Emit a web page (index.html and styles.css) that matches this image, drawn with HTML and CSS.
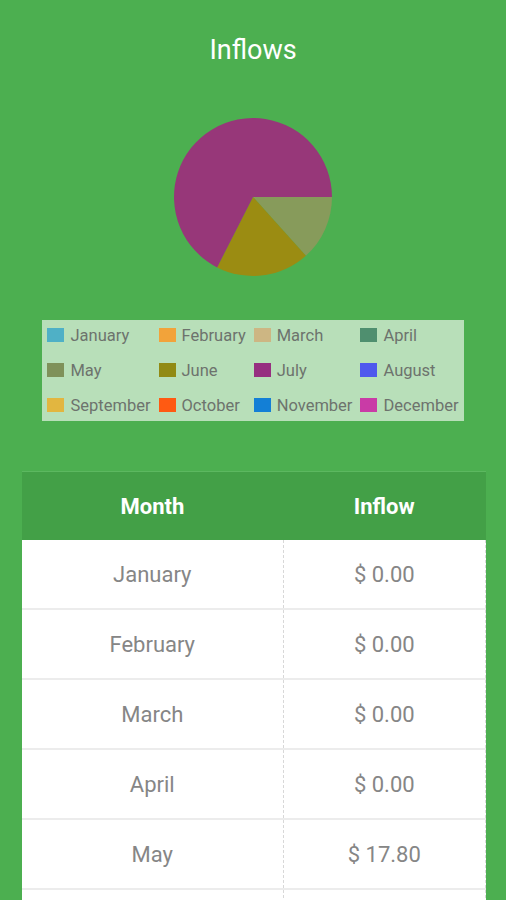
FILE: index.html
```html
<!DOCTYPE html>
<html lang="en">
<head>
    <meta charset="UTF-8">
    <meta name="viewport" content="width=device-width, initial-scale=1.0">
    <title>Inflows</title>
    <link rel="stylesheet" href="styles.css">
</head>
<body>
    <h1 class="title">Inflows</h1>

    <div class="chart">
        <svg width="160" height="160" viewBox="0 0 160 160">
            <path d="M80 80 L159 80 A79 79 0 0 1 132.86 138.71 Z" fill="#879b5b"/>
            <path d="M80 80 L132.86 138.71 A79 79 0 0 1 44.13 150.39 Z" fill="#9b8c12"/>
            <path d="M80 80 L44.13 150.39 A79 79 0 1 1 159 80 Z" fill="#973779"/>
        </svg>
    </div>

    <div class="legend-wrap">
        <div class="legend">
            <div class="legend-item"><span class="swatch" style="background:#4fb0c6"></span>January</div>
            <div class="legend-item"><span class="swatch" style="background:#f2a33a"></span>February</div>
            <div class="legend-item"><span class="swatch" style="background:#cdb683"></span>March</div>
            <div class="legend-item"><span class="swatch" style="background:#4f8f6f"></span>April</div>
            <div class="legend-item"><span class="swatch" style="background:#7f915a"></span>May</div>
            <div class="legend-item"><span class="swatch" style="background:#918a14"></span>June</div>
            <div class="legend-item"><span class="swatch" style="background:#962f80"></span>July</div>
            <div class="legend-item"><span class="swatch" style="background:#4f58ee"></span>August</div>
            <div class="legend-item"><span class="swatch" style="background:#e2b640"></span>September</div>
            <div class="legend-item"><span class="swatch" style="background:#ff5a12"></span>October</div>
            <div class="legend-item"><span class="swatch" style="background:#137fd6"></span>November</div>
            <div class="legend-item"><span class="swatch" style="background:#c93ba6"></span>December</div>
        </div>
    </div>

    <table class="inflow-table">
        <thead>
            <tr><th>Month</th><th>Inflow</th></tr>
        </thead>
        <tbody>
            <tr><td>January</td><td>$ 0.00</td></tr>
            <tr><td>February</td><td>$ 0.00</td></tr>
            <tr><td>March</td><td>$ 0.00</td></tr>
            <tr><td>April</td><td>$ 0.00</td></tr>
            <tr><td>May</td><td>$ 17.80</td></tr>
            <tr><td></td><td></td></tr>
        </tbody>
    </table>
</body>
</html>
```

FILE: styles.css
```css
body {
    margin: 0;
    padding: 0;
    font-family: Roboto, 'Noto Sans', sans-serif;
    background-color: #4caf50;
    overflow: hidden;
}

.title {
    margin: 0;
    padding-top: 33px;
    font-size: 27px;
    line-height: 34px;
    font-weight: 400;
    color: #fff;
    text-align: center;
}

.chart {
    display: flex;
    justify-content: center;
    margin-top: 50px;
}

.chart svg {
    display: block;
}

.legend-wrap {
    display: flex;
    justify-content: center;
    margin-top: 43px;
}

.legend {
    display: grid;
    grid-template-columns: repeat(4, auto);
    column-gap: 8px;
    row-gap: 5px;
    padding: 0 5px 1px 5px;
    background-color: #b8dfb9;
}

.legend-item {
    display: flex;
    align-items: center;
    height: 30px;
    font-size: 16.5px;
    color: #6d736d;
    white-space: nowrap;
}

.swatch {
    width: 17px;
    height: 14px;
    margin-right: 6px;
    flex-shrink: 0;
}

/* table */
.inflow-table {
    margin: 50px 20px 0 22px;
    width: 464px;
    border-collapse: collapse;
    table-layout: fixed;
    background-color: #fff;
}

.inflow-table th {
    height: 68px;
    padding: 0;
    background-color: #43a047;
    color: #fff;
    font-size: 22px;
    font-weight: 700;
    text-align: center;
    border-top: 1px solid #5cb860;
}

.inflow-table th:first-child,
.inflow-table td:first-child {
    width: 261px;
}

.inflow-table td {
    height: 68px;
    padding: 0;
    font-size: 22px;
    color: #868686;
    text-align: center;
    border-bottom: 2px solid #ececec;
}

.inflow-table td + td {
    border-left: 1px dashed #d8d8d8;
    border-right: 1px dashed #d8d8d8;
}
```
